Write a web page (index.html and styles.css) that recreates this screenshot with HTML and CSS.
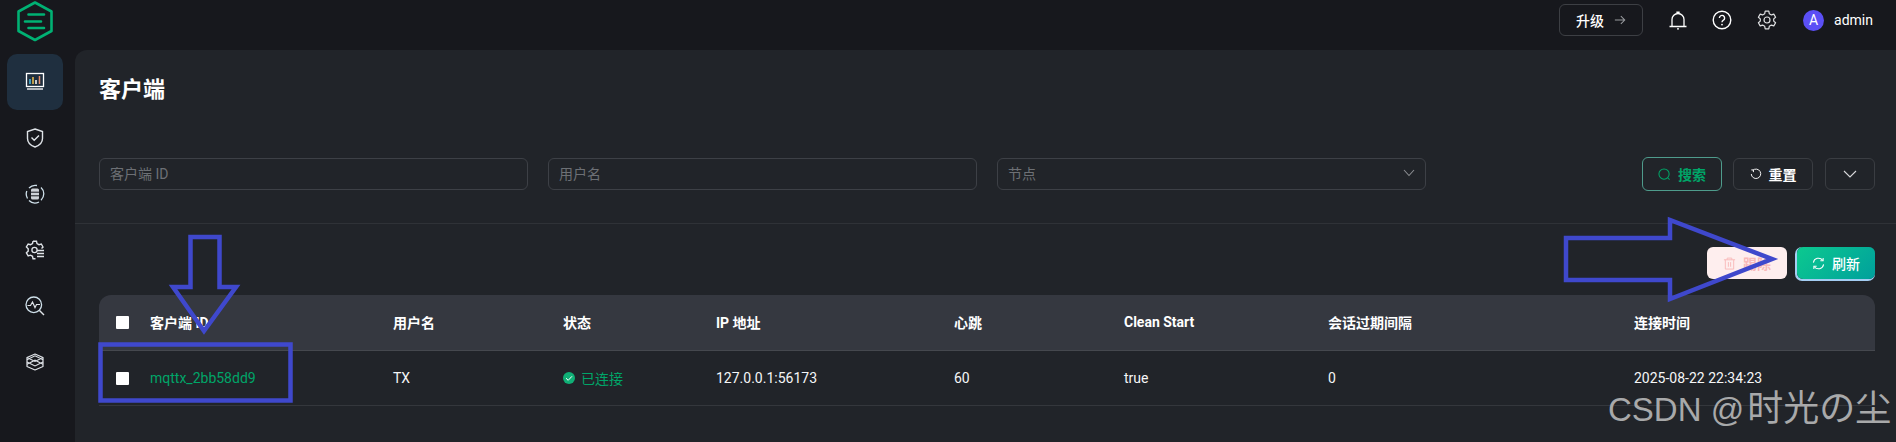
FILE: index.html
```html
<!DOCTYPE html>
<html lang="zh-CN">
<head>
<meta charset="utf-8">
<title>客户端</title>
<link rel="stylesheet" href="styles.css">
</head>
<body>
<div class="app">
  <header class="topbar">
    <svg class="logo" viewBox="0 0 40 42" width="40" height="42"><path d="M19 2.500 35.500 11.500V31L19 40 2.500 31V11.500Z" fill="none" stroke="#00b173" stroke-width="2.600" stroke-linejoin="round"/><path d="M12.500 14.500H28M9 21.500H25M12.500 28H28" fill="none" stroke="#00b173" stroke-width="2.600" stroke-linecap="round"/></svg>
    <div class="top-actions">
      <button class="upgrade">升级 <svg viewBox="0 0 14 14" width="12" height="12"><path d="M1 7H12.500M8 2.500 12.500 7 8 11.500" fill="none" stroke="#9a9ca0" stroke-width="1.200"/></svg></button>
      <svg class="ticon bell" viewBox="0 0 20 20" width="20" height="20"><path d="M1.500 16.500H18.500M4 16.500V9.500A6 6 0 0 1 16 9.500V16.500M9 3.500V2.200H11V3.500M9 18.800H11" fill="none" stroke="#fff" stroke-width="1.300"/></svg>
      <svg class="ticon help" viewBox="0 0 20 20" width="20" height="20"><circle cx="10" cy="10" r="8.800" fill="none" stroke="#fff" stroke-width="1.400"/><path d="M7.400 8A2.600 2.600 0 1 1 11.400 10.200C10.400 10.800 10 11.200 10 12.300" fill="none" stroke="#fff" stroke-width="1.400"/><circle cx="10" cy="14.600" r=".9" fill="#fff"/></svg>
      <svg class="ticon gear" viewBox="0 0 20 20" width="20" height="20"><path d="M8.200 1.200H11.800L12.300 3.700 14.400 4.900 16.800 4.100 18.600 7.200 16.700 8.900V11.100L18.600 12.800 16.800 15.900 14.400 15.100 12.300 16.300 11.800 18.800H8.200L7.700 16.300 5.600 15.100 3.200 15.900 1.400 12.800 3.300 11.100V8.900L1.400 7.200 3.200 4.100 5.600 4.900 7.700 3.700Z" fill="none" stroke="#dfe0e2" stroke-width="1.200" stroke-linejoin="round"/><circle cx="10" cy="10" r="3" fill="none" stroke="#dfe0e2" stroke-width="1.200"/></svg>
      <span class="avatar">A</span>
      <span class="user">admin</span>
    </div>
  </header>
  <div class="body">
    <nav class="sidebar">
      <a class="nav-item active"><svg viewBox="0 0 20 20" width="20" height="20"><rect x="1.500" y="1.500" width="17" height="13" fill="none" stroke="#fff" stroke-width="1.300"/><path d="M5 12V7" stroke="#4fc3e8" stroke-width="1.500"/><path d="M8 12V5" stroke="#f2c14e" stroke-width="1.500"/><path d="M11 12V8" stroke="#fff" stroke-width="1.500"/><path d="M14.500 12V4" stroke="#e88f6a" stroke-width="1.500"/><path d="M2 17H18" stroke="#fff" stroke-width="1.300"/></svg></a>
      <a class="nav-item"><svg viewBox="0 0 20 20" width="20" height="20"><path d="M10 1 17.500 3.500V10.500C17.500 15 13.500 17.800 10 19 6.500 17.800 2.500 15 2.500 10.500V3.500Z" fill="none" stroke="#dfe3e8" stroke-width="1.400"/><path d="M6.500 9.500 9.200 12.200 14 7.500" fill="none" stroke="#dfe3e8" stroke-width="1.400"/></svg></a>
      <a class="nav-item"><svg viewBox="0 0 20 20" width="20" height="20"><path d="M4 4A8.600 8.600 0 0 1 12 1.500M16 3.500A8.600 8.600 0 0 1 16 16.200M14 18A8.600 8.600 0 0 1 4 16.500M2.500 14.500A8.600 8.600 0 0 1 1.800 7" fill="none" stroke="#cfe0ea" stroke-width="1.300"/><rect x="6" y="4.500" width="8" height="11" rx="1.500" fill="#cfd3d8"/><path d="M6 8.200H14M6 11.800H14" stroke="#17181d" stroke-width="1"/></svg></a>
      <a class="nav-item"><svg viewBox="0 0 20 20" width="20" height="20"><path d="M8 1.200H11.500L12 3.600 14 4.700 16.300 4 18 7 16.500 8.400M8 1.200 7.500 3.600 5.500 4.700 3.200 4 1.400 7 3.200 8.700V11.100L1.400 12.800 3.200 15.900 5.500 15.200 7.500 16.300 8 18.800H10.500" fill="none" stroke="#dfe3e8" stroke-width="1.400"/><circle cx="9.500" cy="10" r="2.600" fill="none" stroke="#dfe3e8" stroke-width="1.300"/><path d="M12 10.500H19M12 13.500H19M12 16.500H19" stroke="#dfe3e8" stroke-width="1.300"/></svg></a>
      <a class="nav-item"><svg viewBox="0 0 20 20" width="20" height="20"><circle cx="8.800" cy="8.800" r="7.800" fill="none" stroke="#cfe0ea" stroke-width="1.300"/><path d="M14.500 14.500 19 19" stroke="#dfe3e8" stroke-width="1.400"/><path d="M2.500 9.500H5.500L7.500 6 10 11.500 11.500 8.500H15" fill="none" stroke="#dfe3e8" stroke-width="1.200"/></svg></a>
      <a class="nav-item"><svg viewBox="0 0 20 20" width="20" height="20"><path d="M10 2 18 5.500V14.500L10 18 2 14.500V5.500Z" fill="none" stroke="#dfe3e8" stroke-width="1.200" stroke-linejoin="round"/><path d="M2 5.500 10 9.500 18 5.500M2 10 10 14 18 10M2 7.800 10 3.800 18 7.800M2 12.200 10 8.200 18 12.200" fill="none" stroke="#dfe3e8" stroke-width="1.100"/></svg></a>
    </nav>
    <main class="main">
      <section class="head-section">
        <h1 class="title">客户端</h1>
        <div class="filters">
          <div class="fields">
            <div class="field">客户端 ID</div>
            <div class="field">用户名</div>
            <div class="field select">节点<svg viewBox="0 0 12 8" width="12" height="8"><path d="M1 1 6 6.500 11 1" fill="none" stroke="#8b8d91" stroke-width="1.100"/></svg></div>
          </div>
          <div class="filter-btns">
            <button class="btn search"><svg viewBox="0 0 14 14" width="13" height="13"><circle cx="6.500" cy="6.500" r="5.500" fill="none" stroke="#00a568" stroke-width="1.100"/><path d="M10.500 10.500 12.500 12.500" stroke="#00a568" stroke-width="1.100"/></svg>搜索</button>
            <button class="btn reset"><svg viewBox="0 0 14 14" width="12" height="12"><path d="M3.200 2.800A5.500 5.500 0 1 1 1.500 7" fill="none" stroke="#fff" stroke-width="1.100"/><path d="M1.500 2.200H4V4.800" fill="none" stroke="#fff" stroke-width="1.100"/></svg>重置</button>
            <button class="btn more"><svg viewBox="0 0 14 8" width="14" height="8"><path d="M1 1 7 7 13 1" fill="none" stroke="#d8d9db" stroke-width="1.100"/></svg></button>
          </div>
        </div>
      </section>
      <section class="list-section">
        <div class="toolbar">
          <button class="btn danger"><svg viewBox="0 0 14 14" width="13" height="13"><path d="M1 3H13M4.500 3V1.200H9.500V3M2.500 3V13H11.500V3M5.800 5.500V10.500M8.200 5.500V10.500" fill="none" stroke="#f9b9b9" stroke-width="1"/></svg>踢除</button>
          <button class="btn refresh"><svg viewBox="0 0 14 14" width="13" height="13"><path d="M1.500 6A5.600 5.600 0 0 1 11.500 3.500M12.500 8A5.600 5.600 0 0 1 2.500 10.500" fill="none" stroke="#fff" stroke-width="1.100"/><path d="M12 1V4H9M2 13V10H5" fill="none" stroke="#fff" stroke-width="1.100"/></svg>刷新</button>
        </div>
        <div class="table">
          <div class="row thead">
            <div class="cell"><span class="check"></span></div>
            <div class="cell">客户端 ID</div>
            <div class="cell">用户名</div>
            <div class="cell">状态</div>
            <div class="cell">IP 地址</div>
            <div class="cell">心跳</div>
            <div class="cell">Clean Start</div>
            <div class="cell">会话过期间隔</div>
            <div class="cell">连接时间</div>
          </div>
          <div class="row tbody">
            <div class="cell"><span class="check"></span></div>
            <div class="cell link">mqttx_2bb58dd9</div>
            <div class="cell">TX</div>
            <div class="cell status"><svg viewBox="0 0 12 12" width="12" height="12"><circle cx="6" cy="6" r="6" fill="#10b076"/><path d="M3 6.200 5.200 8.300 9 4.300" fill="none" stroke="#fff" stroke-width="1"/></svg>已连接</div>
            <div class="cell">127.0.0.1:56173</div>
            <div class="cell">60</div>
            <div class="cell">true</div>
            <div class="cell">0</div>
            <div class="cell">2025-08-22 22:34:23</div>
          </div>
        </div>
      </section>
    </main>
  </div>
</div>
<svg class="annotations" viewBox="0 0 1896 442" width="1896" height="442">
  <g fill="none" stroke="#3f48cc" stroke-width="4.500">
    <path d="M190.500 237H219.500V287H236L204 331 173 287H190.500Z"/>
    <rect x="100.500" y="344.500" width="190" height="56"/>
    <path d="M1566 238H1670V220L1772 259 1670 299V280H1566Z"/>
  </g>
</svg>
<div class="watermark">CSDN @<span class="wm-cjk">时光の尘</span></div>
</body>
</html>
```
FILE: styles.css
```css
* { box-sizing: border-box; }
html, body { margin: 0; padding: 0; }
body {
  width: 1896px;
  height: 442px;
  overflow: hidden;
  position: relative;
  background: #17181d;
  color: #fff;
  font-family: Roboto, "Noto Sans CJK SC", sans-serif;
  font-size: 14px;
}
button { font-family: inherit; cursor: pointer; }
.app { display: flex; flex-direction: column; height: 442px; }
.topbar {
  height: 50px;
  flex: none;
  display: flex;
  align-items: flex-start;
  justify-content: space-between;
  padding: 0 23px 0 16px;
  background: #17181d;
}
.logo { display: block; }
.top-actions { display: flex; align-items: center; height: 40px; }
.upgrade {
  width: 84px;
  height: 32px;
  border: 1px solid #3d3f44;
  border-radius: 6px;
  background: transparent;
  color: #fff;
  font-size: 14px;
  font-weight: 500;
  display: flex;
  align-items: center;
  justify-content: center;
  gap: 10px;
}
.ticon { display: block; flex: none; }
.bell { margin-left: 25px; }
.help { margin-left: 24px; }
.gear { margin-left: 25px; }
.avatar {
  width: 21px;
  height: 21px;
  margin-left: 26px;
  border-radius: 50%;
  background: #5b4ff5;
  font-size: 14px;
  line-height: 21px;
  text-align: center;
}
.user { margin-left: 10px; font-size: 14px; }
.body { flex: 1; display: flex; min-height: 0; }
.sidebar {
  width: 75px;
  flex: none;
  display: flex;
  flex-direction: column;
  padding: 4px 0 0 7px;
}
.nav-item {
  width: 56px;
  height: 56px;
  display: flex;
  align-items: center;
  justify-content: center;
  border-radius: 10px;
}
.nav-item.active { background: #1f2f3f; }
.main {
  flex: 1;
  background: #212429;
  border-radius: 12px 0 0 0;
  min-width: 0;
}
.head-section {
  height: 174px;
  padding: 26px 21px 0 24px;
  border-bottom: 1px solid #2f3237;
}
.title {
  margin: 0;
  font-size: 22px;
  line-height: 28px;
  font-weight: 700;
}
.filters {
  margin-top: 53px;
  display: flex;
  align-items: center;
  justify-content: space-between;
}
.fields { display: flex; gap: 20px; }
.field {
  width: 429px;
  height: 32px;
  padding: 0 10px 2px;
  display: flex;
  align-items: center;
  justify-content: space-between;
  border: 1px solid #3d4046;
  border-radius: 6px;
  color: #6d7075;
  font-size: 14px;
}
.filter-btns { display: flex; align-items: center; gap: 11px; }
.btn {
  height: 32px;
  display: flex;
  align-items: center;
  justify-content: center;
  gap: 7px;
  border: 1px solid #3a3d42;
  border-radius: 6px;
  background: transparent;
  color: #fff;
  font-size: 14px;
  font-weight: 700;
  padding: 0;
}
.search { width: 80px; height: 34px; border-color: #4f9c8c; color: #00a568; }
.reset { width: 80px; }
.more { width: 50px; margin-left: 1px; }
.list-section { padding: 23px 21px 0 24px; }
.toolbar { display: flex; justify-content: flex-end; gap: 10px; }
.danger { width: 80px; border: 0; background: #feeeee; color: #f9b9b9; }
.refresh {
  width: 78px;
  border: 0;
  font-weight: 500;
  background: linear-gradient(135deg, #0cc98f, #00a09c);
  box-shadow: -1px 1px 0 1px #a4cdf2;
}
.table { margin-top: 16px; }
.row {
  display: grid;
  grid-template-columns: 51px 243px 170px 153px 238px 170px 204px 306px 241px;
  align-items: center;
}
.thead {
  height: 56px;
  background: #353840;
  border-radius: 12px 12px 0 0;
  border-bottom: 1px solid #45484e;
  font-weight: 700;
  font-size: 14px;
}
.thead .cell + .cell { padding-bottom: 2px; }
.tbody {
  height: 55px;
  border-bottom: 1px solid #34373c;
  font-size: 14px;
  color: #f5f6f7;
}
.check {
  display: block;
  width: 13px;
  height: 13px;
  margin-left: 17px;
  background: #fff;
  border-radius: 1px;
}
.link { color: #00a568; }
.status { color: #00a568; display: flex; align-items: center; gap: 6px; }
.annotations { position: absolute; left: 0; top: 0; pointer-events: none; }
.watermark {
  position: absolute;
  left: 1608px;
  top: 387px;
  color: #a8a9aa;
  font-family: "Liberation Sans", "Noto Sans CJK JP", sans-serif;
  font-size: 33px;
  line-height: 44px;
  white-space: nowrap;
}
.wm-cjk { font-size: 36px; margin-left: 3px; }
```
